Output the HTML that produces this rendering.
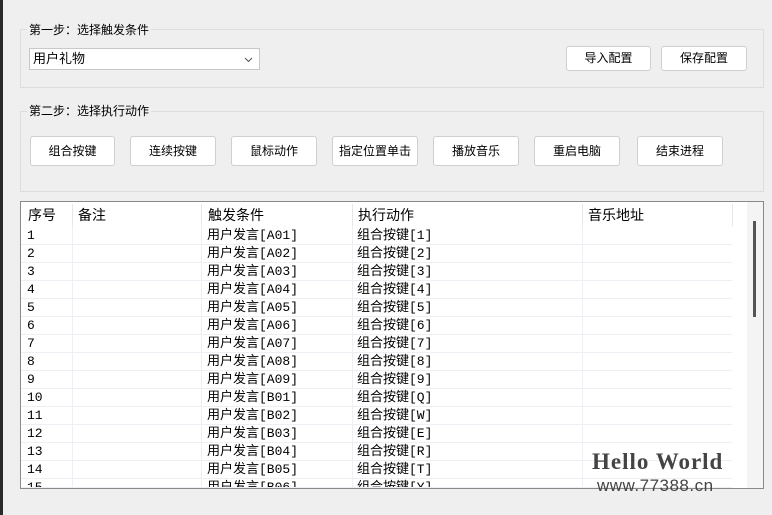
<!DOCTYPE html>
<html><head><meta charset="utf-8"><style>
body{margin:0;width:772px;height:515px;background:#efefef;position:relative;overflow:hidden;font-family:"Liberation Sans","Noto Sans CJK SC",sans-serif;font-size:12px;color:#000}
.a{position:absolute}
.grp{position:absolute;border:1px solid #dcdcdc;box-sizing:border-box}
.lg{position:absolute;background:#efefef;padding:0 2px;font-size:12px;line-height:14px}
.btn{position:absolute;background:#fff;border:1px solid #cfcfcf;border-radius:3px;box-sizing:border-box;text-align:center;font-size:12px}
.tbl{position:absolute;left:20px;top:201px;width:744px;height:288px;border:1px solid #8a8a8a;box-sizing:border-box;background:#fff;overflow:hidden}
.row{position:absolute;left:1px;height:18px;width:711px;border-bottom:1px solid #eeeef4;box-sizing:border-box;font-family:"Liberation Mono","Noto Sans CJK SC",monospace;font-size:13px;line-height:18px}
.row span{position:absolute;top:0}
.vl{position:absolute;top:24px;bottom:0;width:1px;background:#eeeef4}
</style></head><body>
<div class="a" style="left:0;top:0;width:3px;height:515px;background:#2a2a2a"></div>
<div class="grp" style="left:20px;top:29px;width:744px;height:59px"></div>
<div class="lg" style="left:27px;top:23px">第一步：选择触发条件</div>
<div class="a" style="left:29px;top:48px;width:231px;height:22px;background:#fff;border:1px solid #c8c8c8;box-sizing:border-box;font-size:13px;line-height:20px;padding-left:3px">用户礼物<svg style="position:absolute;right:6px;top:8px" width="9" height="6"><path d="M1 1L4.5 4.5L8 1" stroke="#555" fill="none"/></svg></div>
<div class="btn" style="left:566px;top:46px;width:85px;height:25px;line-height:23px">导入配置</div>
<div class="btn" style="left:661px;top:46px;width:86px;height:25px;line-height:23px">保存配置</div>
<div class="grp" style="left:20px;top:111px;width:744px;height:81px"></div>
<div class="lg" style="left:27px;top:104px">第二步：选择执行动作</div>
<div class="btn" style="left:30px;top:136px;width:85px;height:30px;line-height:28px">组合按键</div>
<div class="btn" style="left:130px;top:136px;width:86px;height:30px;line-height:28px">连续按键</div>
<div class="btn" style="left:231px;top:136px;width:86px;height:30px;line-height:28px">鼠标动作</div>
<div class="btn" style="left:332px;top:136px;width:86px;height:30px;line-height:28px">指定位置单击</div>
<div class="btn" style="left:433px;top:136px;width:86px;height:30px;line-height:28px">播放音乐</div>
<div class="btn" style="left:534px;top:136px;width:86px;height:30px;line-height:28px">重启电脑</div>
<div class="btn" style="left:637px;top:136px;width:86px;height:30px;line-height:28px">结束进程</div>
<div class="tbl">
<div class="a" style="left:0;top:0;width:712px;height:26px;font-size:14px;line-height:26px">
<span class="a" style="left:7px">序号</span><span class="a" style="left:57px">备注</span><span class="a" style="left:187px">触发条件</span><span class="a" style="left:337px">执行动作</span><span class="a" style="left:567px">音乐地址</span>
<div class="a" style="left:51px;top:2px;width:1px;height:22px;background:#e6e6e6"></div>
<div class="a" style="left:180px;top:2px;width:1px;height:22px;background:#e6e6e6"></div>
<div class="a" style="left:331px;top:2px;width:1px;height:22px;background:#e6e6e6"></div>
<div class="a" style="left:561px;top:2px;width:1px;height:22px;background:#e6e6e6"></div>
<div class="a" style="left:711px;top:2px;width:1px;height:22px;background:#e6e6e6"></div>
</div>
<div class="vl" style="left:51px"></div><div class="vl" style="left:180px"></div><div class="vl" style="left:331px"></div><div class="vl" style="left:561px"></div>
<div class="a" style="left:726px;top:0;width:16px;height:286px;background:#f4f4f4"></div>
<div class="a" style="left:732px;top:19px;width:3px;height:96px;background:#555"></div>
</div>
<div class="a" style="left:20px;top:201px;width:744px;height:288px;pointer-events:none">
<div class="row" style="top:26px"><span style="left:6px">1</span><span style="left:186px">用户发言[A01]</span><span style="left:336px">组合按键[1]</span></div>
<div class="row" style="top:44px"><span style="left:6px">2</span><span style="left:186px">用户发言[A02]</span><span style="left:336px">组合按键[2]</span></div>
<div class="row" style="top:62px"><span style="left:6px">3</span><span style="left:186px">用户发言[A03]</span><span style="left:336px">组合按键[3]</span></div>
<div class="row" style="top:80px"><span style="left:6px">4</span><span style="left:186px">用户发言[A04]</span><span style="left:336px">组合按键[4]</span></div>
<div class="row" style="top:98px"><span style="left:6px">5</span><span style="left:186px">用户发言[A05]</span><span style="left:336px">组合按键[5]</span></div>
<div class="row" style="top:116px"><span style="left:6px">6</span><span style="left:186px">用户发言[A06]</span><span style="left:336px">组合按键[6]</span></div>
<div class="row" style="top:134px"><span style="left:6px">7</span><span style="left:186px">用户发言[A07]</span><span style="left:336px">组合按键[7]</span></div>
<div class="row" style="top:152px"><span style="left:6px">8</span><span style="left:186px">用户发言[A08]</span><span style="left:336px">组合按键[8]</span></div>
<div class="row" style="top:170px"><span style="left:6px">9</span><span style="left:186px">用户发言[A09]</span><span style="left:336px">组合按键[9]</span></div>
<div class="row" style="top:188px"><span style="left:6px">10</span><span style="left:186px">用户发言[B01]</span><span style="left:336px">组合按键[Q]</span></div>
<div class="row" style="top:206px"><span style="left:6px">11</span><span style="left:186px">用户发言[B02]</span><span style="left:336px">组合按键[W]</span></div>
<div class="row" style="top:224px"><span style="left:6px">12</span><span style="left:186px">用户发言[B03]</span><span style="left:336px">组合按键[E]</span></div>
<div class="row" style="top:242px"><span style="left:6px">13</span><span style="left:186px">用户发言[B04]</span><span style="left:336px">组合按键[R]</span></div>
<div class="row" style="top:260px"><span style="left:6px">14</span><span style="left:186px">用户发言[B05]</span><span style="left:336px">组合按键[T]</span></div>
<div class="row" style="top:278px;height:9px;overflow:hidden"><span style="left:6px">15</span><span style="left:186px">用户发言[B06]</span><span style="left:336px">组合按键[Y]</span></div>
</div>
<div class="a" style="left:592px;top:449px;font-family:'Liberation Serif',serif;font-weight:bold;font-size:23px;color:#444;letter-spacing:1px">Hello World</div>
<div class="a" style="left:597px;top:476px;font-size:17px;color:#444;letter-spacing:0.5px">www.77388.cn</div>
</body></html>
